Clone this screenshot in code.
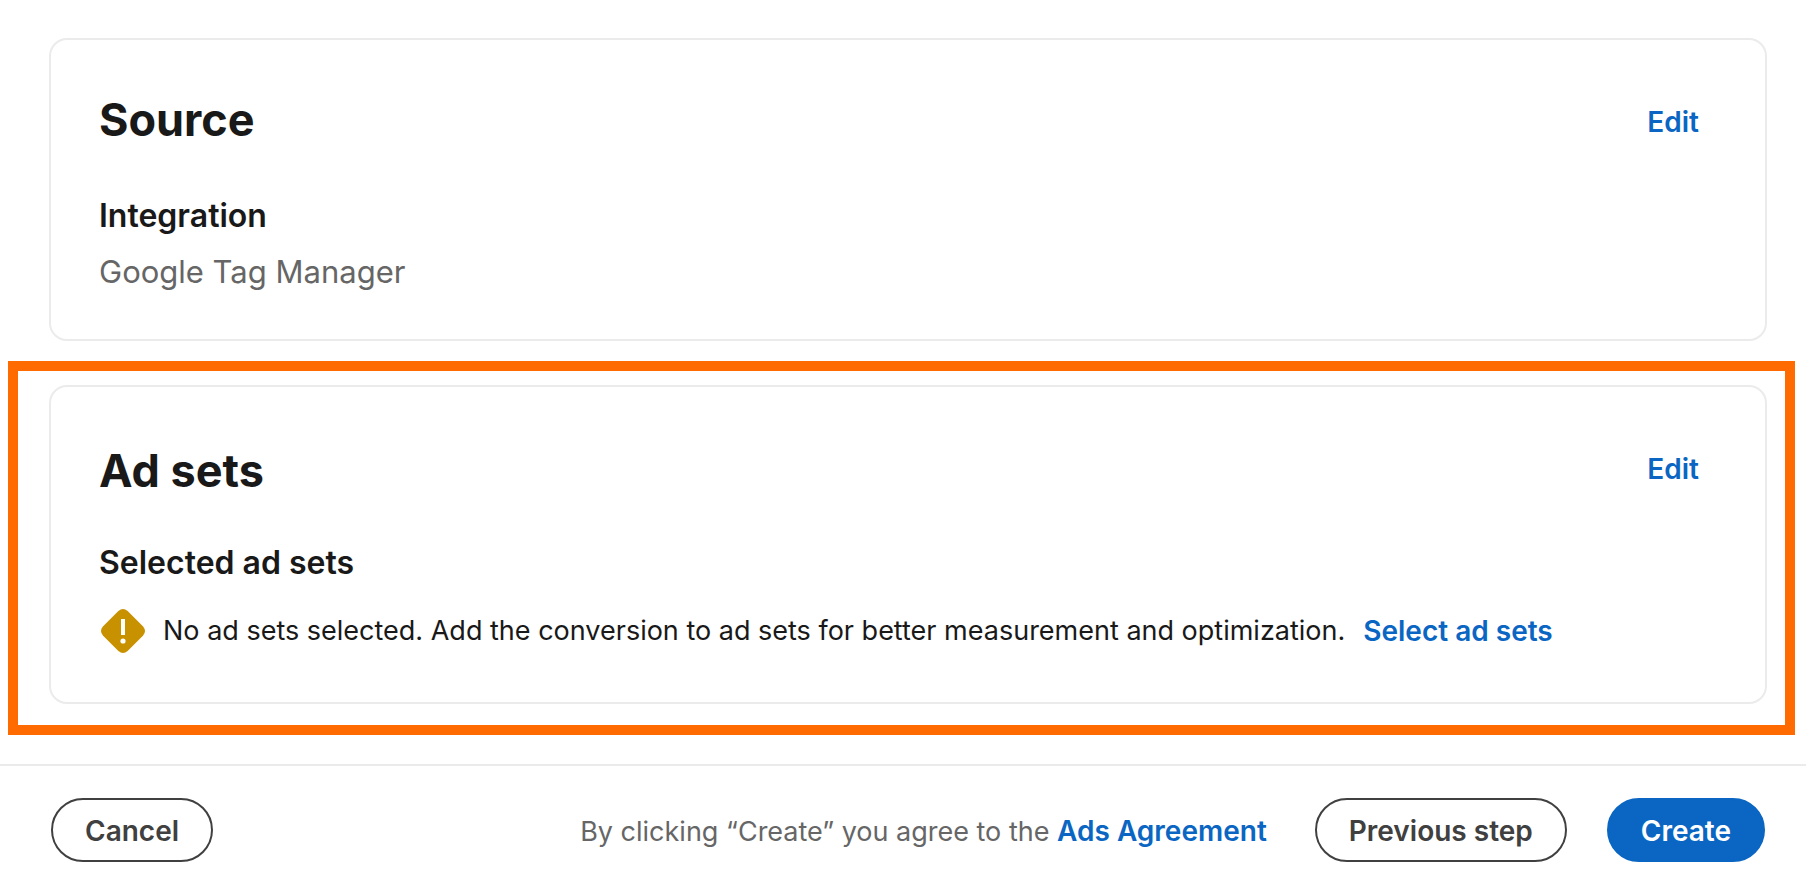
<svelte:head>
  <title>Review conversion</title>
</svelte:head>

<div class="page">
  <main>
    <div class="plain">
      <section class="card" aria-labelledby="source-title">
        <header>
          <h2 id="source-title">Source</h2>
          <button type="button" class="link" aria-label="Edit source">Edit</button>
        </header>
        <h3>Integration</h3>
        <p class="value">Google Tag Manager</p>
      </section>
    </div>

    <div class="highlight">
      <section class="card adsets" aria-labelledby="adsets-title">
        <header>
          <h2 id="adsets-title">Ad sets</h2>
          <button type="button" class="link" aria-label="Edit ad sets">Edit</button>
        </header>
        <h3>Selected ad sets</h3>
        <div class="notice">
          <svg class="warning" viewBox="0 0 44 44" aria-hidden="true">
            <path
              fill="#c79100"
              d="M17.4 1.9Q22 -1.9 26.6 1.9L42.1 17.4Q45.9 22 42.1 26.6L26.6 42.1Q22 45.9 17.4 42.1L1.9 26.6Q-1.9 22 1.9 17.4Z"
            />
            <path fill="#fff" d="M20 10h4v16h-4z" />
            <circle cx="22" cy="32" r="2.6" fill="#fff" />
          </svg>
          <p>No ad sets selected. Add the conversion to ad sets for better measurement and optimization.</p>
          <button type="button" class="link">Select ad sets</button>
        </div>
      </section>
    </div>
  </main>

  <footer>
    <button type="button" class="pill">Cancel</button>
    <p class="terms">By clicking “Create” you agree to the <a href="#ads-agreement">Ads Agreement</a></p>
    <button type="button" class="pill">Previous step</button>
    <button type="button" class="pill primary">Create</button>
  </footer>
</div>

<style>
  :global(body) {
    background: #fff;
  }

  .page {
    min-height: 100vh;
    box-sizing: border-box;
    font-family: Inter, "Liberation Sans", sans-serif;
    font-size: 27px;
    line-height: 40px;
    color: #191919;
  }

  h2,
  h3,
  p {
    margin: 0;
  }

  h2 {
    font-size: 45px;
    line-height: 60px;
    font-weight: 700;
  }

  h3 {
    font-size: 32px;
    line-height: 40px;
    font-weight: 600;
  }

  button,
  a {
    font: inherit;
    font-size: 28px;
    font-weight: 600;
    cursor: pointer;
  }

  main {
    padding: 38px 11px 29px 8px;
  }

  .plain {
    padding: 0 28px 20px 41px;
  }

  .highlight {
    border: 10px solid #ff6b00;
    padding: 14px 18px 21px 31px;
  }

  .card {
    border: 2px solid #ebebeb;
    border-radius: 18px;
    padding: 50px 66px 47px 48px;
  }

  .card header {
    display: flex;
    justify-content: space-between;
    align-items: flex-start;
    min-height: 106px;
  }

  .card header .link {
    margin-top: 12px;
  }

  .adsets h2 {
    padding-top: 4px;
  }

  .value {
    font-size: 31px;
    margin-top: 16px;
    color: #666;
  }

  .link {
    border: 0;
    padding: 0;
    background: none;
    color: #0a66c2;
  }

  .notice {
    display: flex;
    align-items: center;
    gap: 18px;
    margin: 26px 0 2px 2px;
  }

  .warning {
    flex: none;
    width: 44px;
    height: 44px;
  }

  footer {
    display: flex;
    align-items: center;
    border-top: 2px solid #ebebeb;
    padding: 32px 41px 32px 51px;
  }

  .terms {
    margin-left: auto;
    margin-right: 48px;
    padding-top: 2px;
    color: #666;
  }

  .terms a {
    color: #0a66c2;
    text-decoration: none;
  }

  .pill {
    box-sizing: border-box;
    height: 64px;
    padding: 2px 32px 0;
    border: 2px solid #404040;
    border-radius: 32px;
    background: #fff;
    color: #404040;
  }

  .primary {
    margin-left: 40px;
    border-color: #0a66c2;
    background: #0a66c2;
    color: #fff;
  }
</style>
